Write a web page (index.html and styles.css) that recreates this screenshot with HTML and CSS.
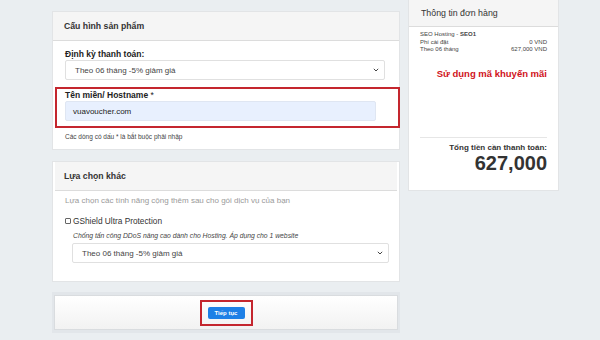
FILE: index.html
```html
<!DOCTYPE html>
<html lang="vi">
<head>
  <meta charset="UTF-8" />
  <meta name="viewport" content="width=device-width, initial-scale=1.0"/>
  <title>Cấu hình sản phẩm</title>
  <link rel="stylesheet" href="styles.css">
</head>
<body>
  <div class="page">
    <div class="main-col">

      <div class="card">
        <div class="card-header">Cấu hình sản phẩm</div>
        <div class="card-body">
          <div class="field-label">Định kỳ thanh toán:</div>
          <div class="select-box">
            <span>Theo 06 tháng -5% giảm giá</span>
            <svg width="6" height="4" viewBox="0 0 6 4"><path d="M0.8 0.8 L3 3 L5.2 0.8" fill="none" stroke="#444" stroke-width="1"/></svg>
          </div>

          <div class="highlight">
            <div class="field-label">Tên miền/ Hostname <span class="req">*</span></div>
            <div class="text-input">vuavoucher.com</div>
          </div>

          <p class="help-text">Các dòng có dấu * là bắt buộc phải nhập</p>
        </div>
      </div>

      <div class="card card-addons">
        <div class="card-header">Lựa chọn khác</div>
        <div class="card-body">
          <p class="muted">Lựa chọn các tính năng cộng thêm sau cho gói dịch vụ của bạn</p>
          <div class="check-row">
            <span class="checkbox"></span>
            <span>GShield Ultra Protection</span>
          </div>
          <p class="addon-desc">Chống tấn công DDoS nâng cao dành cho Hosting. Áp dụng cho 1 website</p>
          <div class="select-box select-addon">
            <span>Theo 06 tháng -5% giảm giá</span>
            <svg width="6" height="4" viewBox="0 0 6 4"><path d="M0.8 0.8 L3 3 L5.2 0.8" fill="none" stroke="#444" stroke-width="1"/></svg>
          </div>
        </div>
      </div>

      <div class="action-frame">
        <div class="action-panel">
          <div class="btn-highlight">
            <button class="btn-next">Tiếp tục</button>
          </div>
        </div>
      </div>

    </div>

    <div class="order-card">
      <div class="order-header">Thông tin đơn hàng</div>
      <div class="order-body">
        <div class="order-line">SEO Hosting - <b>SEO1</b></div>
        <div class="order-line split"><span>Phí cài đặt</span><span>0 VND</span></div>
        <div class="order-line split"><span>Theo 06 tháng</span><span>627,000 VND</span></div>

        <div class="promo">Sử dụng mã khuyến mãi</div>

        <div class="total">
          <div class="total-label">Tổng tiền cần thanh toán:</div>
          <div class="total-amount">627,000</div>
        </div>
      </div>
    </div>
  </div>
</body>
</html>
```

FILE: styles.css
```css
* {
  box-sizing: border-box;
  margin: 0;
  padding: 0;
}

body {
  background: #eaeef1;
  font-family: "Liberation Sans", Arial, sans-serif;
  color: #333;
  width: 600px;
  height: 340px;
  overflow: hidden;
}

.page {
  display: flex;
  align-items: flex-start;
  gap: 8px;
  padding-left: 52px;
}

.main-col {
  width: 348px;
  padding-top: 11px;
}

.card {
  background: #fff;
  border: 1px solid #e2e4e6;
}

.card-header {
  height: 29px;
  display: flex;
  align-items: center;
  padding-left: 11px;
  background: #f5f5f5;
  border-bottom: 1px solid #dcdcdc;
  font-size: 8.7px;
  font-weight: bold;
  color: #333;
}

.card-body {
  padding: 7px 12px 7px;
}

.field-label {
  font-size: 8.5px;
  font-weight: bold;
  line-height: 12px;
  color: #222;
}

.req {
  font-weight: normal;
}

.select-box {
  height: 20px;
  width: 320px;
  display: flex;
  align-items: center;
  justify-content: space-between;
  padding: 0 5px 0 9px;
  border: 1px solid #e0e0e0;
  border-radius: 2px;
  font-size: 8px;
  color: #444;
  background: #fff;
}

.highlight {
  margin: 7px -13px 0 -10px;
  padding: 0 0 5px 8px;
  border: 2px solid #c4262e;
}

.text-input {
  height: 20px;
  width: 311px;
  display: flex;
  align-items: center;
  padding-left: 7px;
  background: #e8f0fe;
  border: 1px solid #dfe6f2;
  border-radius: 2px;
  font-size: 8px;
  color: #222;
}

.help-text {
  margin-top: 4px;
  font-size: 6.5px;
  line-height: 10px;
  color: #444;
}

.card-addons {
  margin-top: 11px;
  padding: 0 2px;
}

.card-addons .card-header {
  padding-left: 9px;
}

.card-addons .card-body {
  padding: 4px 10px 18px;
}

.muted {
  font-size: 8px;
  line-height: 12px;
  color: #9a9a9a;
}

.check-row {
  margin-top: 8px;
  display: flex;
  align-items: center;
  gap: 2px;
  font-size: 8.3px;
  line-height: 12px;
  color: #333;
}

.checkbox {
  width: 6px;
  height: 6px;
  border: 1px solid #666;
  border-radius: 1px;
  background: #fff;
}

.addon-desc {
  margin-top: 4px;
  padding-left: 8px;
  font-size: 6.8px;
  font-style: italic;
  line-height: 10px;
  color: #444;
}

.select-addon {
  margin: 2px 0 0 7px;
  width: 317px;
}

.action-frame {
  margin-top: 10px;
  padding: 3px 2px;
  background: #e2e6ea;
}

.action-panel {
  display: flex;
  justify-content: center;
  padding: 4px 0 3px;
  border: 1px solid #d9dcdf;
  background: linear-gradient(to bottom, #ffffff, #f2f2f2);
}

.btn-highlight {
  padding: 5px 6px;
  border: 2px solid #c4262e;
}

.btn-next {
  display: block;
  width: 37px;
  height: 12px;
  border: none;
  border-radius: 2px;
  background: #1e80e6;
  color: #fff;
  font-family: "Liberation Sans", Arial, sans-serif;
  font-size: 6px;
  font-weight: bold;
}

.order-card {
  width: 151px;
  height: 191px;
  background: #fff;
  border: 1px solid #e2e4e6;
  border-top: none;
}

.order-header {
  height: 27px;
  display: flex;
  align-items: center;
  padding-left: 12px;
  background: #f5f5f5;
  border-bottom: 1px solid #dcdcdc;
  font-size: 8.8px;
  color: #333;
}

.order-body {
  padding: 4px 11px 0;
}

.order-line {
  font-size: 6px;
  line-height: 7.5px;
  color: #444;
}

.split {
  display: flex;
  justify-content: space-between;
}

.promo {
  margin-top: 14px;
  text-align: right;
  font-size: 9.5px;
  font-weight: bold;
  line-height: 12px;
  color: #d0121b;
}

.total {
  margin-top: 57px;
  padding-top: 5px;
  border-top: 1px solid #e6e6e6;
  text-align: right;
}

.total-label {
  font-size: 8px;
  font-weight: bold;
  line-height: 10px;
  color: #333;
}

.total-amount {
  font-size: 20px;
  font-weight: bold;
  line-height: 20px;
  color: #333;
}
```
